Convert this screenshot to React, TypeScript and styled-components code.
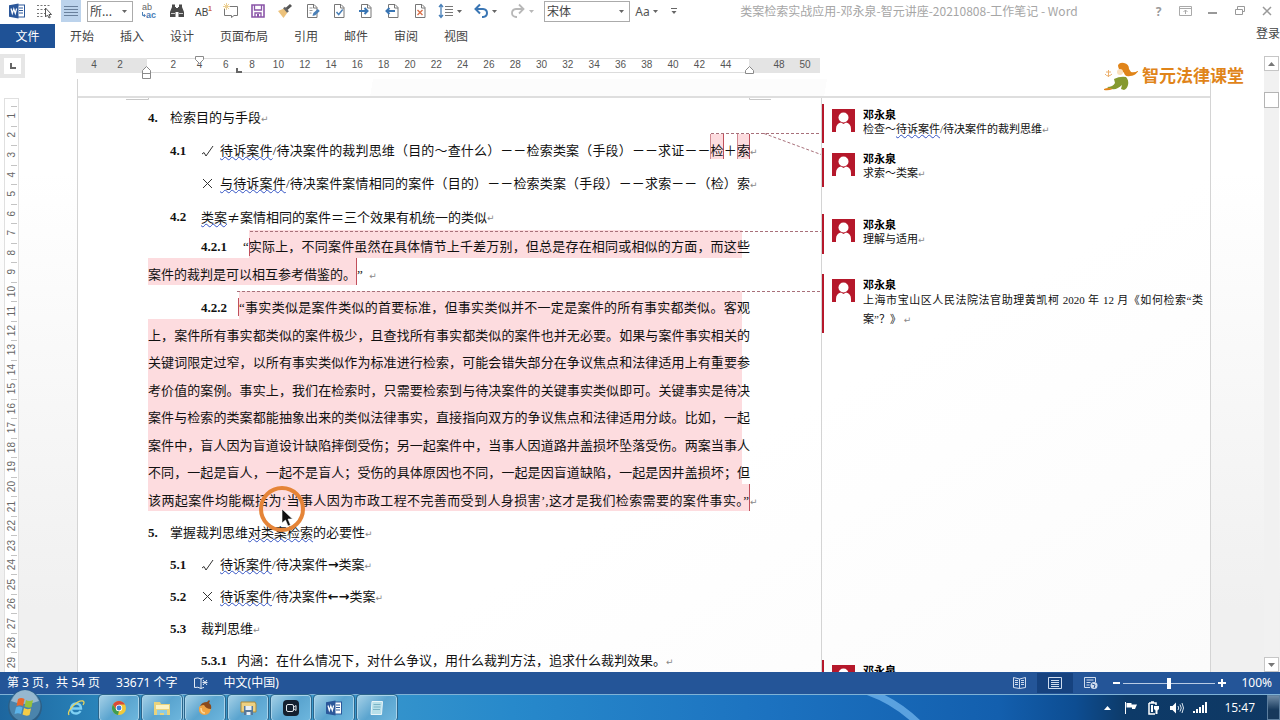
import React from "react";
import styled, { createGlobalStyle, css } from "styled-components";

const UI = `"Noto Sans", "Noto Sans CJK SC", sans-serif`;
const CJK = `"Noto Sans CJK SC", sans-serif`;
const DOC = `"Liberation Serif", "Noto Sans CJK SC", serif`;
const RED = "#b5182b";
const PINK = "#fddcdf";

const Global = createGlobalStyle`
  * { box-sizing: border-box; }
  html, body, #root { height: 100%; margin: 0; }
  body { overflow: hidden; font-family: ${UI}; background: #fff; }
  button, select, input { font: inherit; color: inherit; margin: 0; padding: 0; border: 0; background: none; }
`;

const Shell = styled.div`
  height: 100vh;
  display: flex;
  flex-direction: column;
  overflow: hidden;
  position: relative;
`;

/* ---------- title bar ---------- */
const TitleBar = styled.header`
  display: flex;
  align-items: center;
  height: 22px;
  padding-left: 3px;
  flex: none;
`;
const Tool = styled.button<{ $active?: boolean; $w?: number }>`
  width: ${(p) => p.$w ?? 27}px;
  height: 22px;
  display: flex;
  align-items: center;
  justify-content: center;
  gap: 3px;
  flex: none;
  color: #555;
  font-size: 12px;
  ${(p) =>
    p.$active &&
    css`
      background: linear-gradient(#bcd3ec, #bcd3ec) center / 20px 100% no-repeat;
    `}
`;
const Combo = styled.label<{ $w: number }>`
  display: flex;
  align-items: center;
  width: ${(p) => p.$w}px;
  height: 21px;
  margin: 0 3px;
  padding: 0 5px 0 2px;
  border: 1px solid #ababab;
  flex: none;
  select {
    flex: 1;
    min-width: 0;
    appearance: none;
    font: 12px/18px ${CJK};
    color: #444;
  }
`;
const Title = styled.h1`
  flex: 1;
  margin: 0;
  padding-right: 14px;
  text-align: center;
  white-space: nowrap;
  font: 12px/22px ${CJK};
  color: #a6a6a6;
`;
const WindowButtons = styled.div`
  display: flex;
  font-weight: 700;
  button {
    width: 27px;
    color: #9a9a9a;
  }
`;

/* ---------- ribbon tabs ---------- */
const Tabs = styled.nav`
  display: flex;
  height: 26px;
  padding-top: 2px;
  flex: none;
  font: 12px/22px ${CJK};
  color: #444;
`;
const Tab = styled.button`
  padding: 0 13px;
  height: 24px;
`;
const FileTab = styled(Tab)`
  width: 55px;
  background: #1f5296;
  color: #fff;
  margin-right: 2px;
`;
const SignIn = styled.button`
  margin-left: auto;
  height: 18px;
  line-height: 18px;
  width: 24px;
  white-space: nowrap;
`;

/* ---------- work area ---------- */
const Work = styled.main`
  flex: 1;
  min-height: 0;
  display: flex;
  background: linear-gradient(#fff 20%, #f0f0f0 90%);
`;
const Canvas = styled.div`
  flex: 1;
  min-width: 0;
  display: flex;
  flex-direction: column;
`;
const RulerRow = styled.div`
  display: flex;
  height: 31px;
  flex: none;
  padding-top: 6px;
`;
const Corner = styled.div`
  width: 25px;
  height: 24px;
  border: 4px solid #e6e6e6;
  margin-right: 51px;
  display: flex;
  align-items: center;
  justify-content: center;
`;
const Ruler = styled.div`
  display: flex;
  height: 15px;
  margin-top: 4px;
  font: 10px/14px "Liberation Sans", sans-serif;
  color: #555;
  text-align: center;
  position: relative;
`;
const RulerMargin = styled.div<{ $pad: number }>`
  width: 71px;
  padding-left: ${(p) => p.$pad}px;
  display: flex;
  background: #e4e4e4;
  span {
    width: 26px;
  }
`;
const RulerBody = styled.div`
  width: 602px;
  padding: 0 10px 0 13px;
  display: flex;
  border: solid #dcdcdc;
  border-width: 1px 0;
  line-height: 12px;
  span {
    flex: 1;
  }
`;
const RulerMarks = styled.svg`
  position: absolute;
  left: 0;
  top: -3px;
`;

const DocRow = styled.div`
  flex: 1;
  min-height: 0;
  display: flex;
`;
const SideRuler = styled.div`
  width: 77px;
  padding: 19px 0 0 4px;
  flex: none;
  display: flex;
`;
const SideScale = styled.div`
  width: 15px;
  border: 1px solid #e0e0e0;
  border-bottom: 0;
  background: #fff;
  padding-top: 7px;
  display: flex;
  flex-direction: column;
`;
const SideCell = styled.div`
  flex: 1;
  min-height: 0;
  display: flex;
  align-items: center;
  justify-content: center;
  background: linear-gradient(#c4c4c4, #c4c4c4) 6px 0 / 6px 1px no-repeat;
  font: 10px/10px "Liberation Sans", sans-serif;
  color: #666;
  span {
    writing-mode: vertical-rl;
    transform: rotate(180deg);
  }
`;

const Sheets = styled.div`
  flex: 1;
  min-width: 0;
  display: flex;
  flex-direction: column;
  border: solid #d4d4d4;
  border-width: 0 1px;
  margin-right: 53px;
  background: linear-gradient(150deg, #fff 60%, #fbfbfb);
`;
const PreviousSheet = styled.div`
  height: 19px;
  flex: none;
  border-bottom: 2px solid #dedede;
  background: linear-gradient(100deg, #fff 26%, #fcfcfc 26%, #fcfcfc 66%, #fff 66%);
`;
const Sheet = styled.div`
  flex: 1;
  min-height: 0;
  display: flex;
  overflow: hidden;
`;
const Page = styled.article`
  width: 744px;
  flex: none;
  padding: 0 71px 0 70px;
  border-right: 1px solid #d4d4d4;
  position: relative;
  font: 13px/22px ${DOC};
  color: #111;
`;
const Row = styled.div<{ $pitch: number; $indent?: number }>`
  display: flex;
  height: ${(p) => p.$pitch}px;
  padding: 9px 0 0 ${(p) => p.$indent ?? 0}px;
  white-space: nowrap;
`;
const Label = styled.b<{ $w: number }>`
  display: inline-block;
  width: ${(p) => p.$w}px;
  flex: none;
`;
const Sign = styled.span`
  width: 19px;
  height: 22px;
  display: flex;
  align-items: center;
  flex: none;
`;
const Text = styled.span<{ $fill?: boolean }>`
  ${(p) =>
    p.$fill &&
    css`
      flex: 1;
      text-align: justify;
      text-align-last: justify;
    `}
`;
const Wavy = styled.span`
  text-decoration: underline wavy #3353c4 1px;
  text-underline-offset: 1px;
`;
const Wide = styled.span`
  font-family: ${CJK};
`;
const Arrow = styled.b`
  font-family: "DejaVu Sans", sans-serif;
`;
const Mark = styled.span`
  background: ${PINK};
  box-shadow: inset 1px 0 0 #d08a92, inset -1px 0 0 #c0505c;
  padding: 9px 0 1px;
`;
const Ret = styled.span`
  width: 0;
  color: #888;
  font: 9px/24px "DejaVu Sans", sans-serif;
`;
const Quote = styled.div<{ $lines: number; $after: number }>`
  display: grid;
  grid-template-rows: repeat(${(p) => p.$lines}, minmax(0, 1fr));
  height: ${(p) => (p.$lines * 55) / 2}px;
  margin-bottom: ${(p) => p.$after}px;
  white-space: nowrap;
`;
const Line = styled.div<{ $indent?: number }>`
  display: flex;
  padding-left: ${(p) => p.$indent ?? 0}px;
`;
const Marked = styled.span<{ $kind: "full" | "end" | "short" }>`
  padding-top: 6px;
  background: linear-gradient(${PINK}, ${PINK}) 0 0 / ${(p) => (p.$kind === "full" ? "calc(100% - 8px)" : "100%")} 100% no-repeat;
  ${(p) =>
    p.$kind !== "short" &&
    css`
      flex: 1;
      text-align: justify;
      text-align-last: justify;
    `}
  ${(p) =>
    p.$kind !== "full" &&
    css`
      border-right: 1px solid #c0505c;
    `}
`;
const Plain = styled.span`
  padding-top: 6px;
`;
const Tail = styled(Plain)`
  width: 0;
`;
const Overlay = styled.svg`
  position: absolute;
  left: 1px;
  top: 0;
  overflow: visible;
  pointer-events: none;
`;

/* ---------- comments ---------- */
const Comments = styled.aside`
  flex: 1;
  min-width: 0;
  padding-top: 6px;
  display: flex;
  flex-direction: column;
`;
const Comment = styled.section<{ $gap: number; $h: number }>`
  margin-top: ${(p) => p.$gap}px;
  height: ${(p) => p.$h}px;
  flex: none;
  border-left: 2px solid ${RED};
  padding: 3px 7px 0 8px;
  display: flex;
  gap: 8px;
  svg {
    flex: none;
    margin-top: 2px;
  }
  h2 {
    margin: 0;
    font: bold 11px/15px ${CJK};
    color: #000;
  }
`;
const CommentBody = styled.div`
  flex: 1;
`;
const CommentLine = styled.p<{ $kind?: "first" | "last" }>`
  margin: 0;
  font: 11px/15px ${DOC};
  color: #111;
  white-space: nowrap;
  ${Ret} {
    line-height: 1;
  }
  ${(p) =>
    p.$kind === "first" &&
    css`
      line-height: 16px;
      text-align-last: justify;
    `}
  ${(p) =>
    p.$kind === "last" &&
    css`
      line-height: 22px;
    `}
`;

/* ---------- scroll bar ---------- */
const Scroll = styled.div`
  width: 15px;
  margin: 8px 1px 0 0;
  background: #f1f1f1;
  display: flex;
  flex-direction: column;
`;
const ScrollButton = styled.button`
  height: 15px;
  border: 1px solid #c6c6c6;
  background: #fff;
  display: flex;
  align-items: center;
  justify-content: center;
`;
const Thumb = styled.div`
  height: 16px;
  margin: 21px 0 auto;
  border: 1px solid #b4b4b4;
  background: #fff;
`;

/* ---------- brand ---------- */
const Brand = styled.div`
  position: absolute;
  right: 36px;
  top: 62px;
  display: flex;
  align-items: center;
  gap: 4px;
  color: #e08419;
  font: bold 17px/30px ${DOC};
`;

/* ---------- status bar ---------- */
const Status = styled.footer`
  height: 22px;
  flex: none;
  display: flex;
  align-items: center;
  padding: 0 8px 0 7px;
  background: #245598;
  color: #fff;
  font: 12px/20px ${UI};
  white-space: nowrap;
`;
const StatusItem = styled.span`
  margin-right: 16px;
  display: flex;
`;
const View = styled.button<{ $active?: boolean; $first?: boolean }>`
  width: 36px;
  height: 20px;
  display: flex;
  align-items: center;
  justify-content: center;
  background: ${(p) => (p.$active ? "#16427f" : "none")};
  ${(p) => p.$first && "margin-left: auto;"}
`;
const Step = styled.button`
  width: 14px;
  display: flex;
  justify-content: center;
`;
const Zoom = styled.input`
  width: 92px;
  height: 14px;
  appearance: none;
  background: linear-gradient(#b9cbe4, #b9cbe4) center / 100% 1px no-repeat;
  &::-webkit-slider-thumb {
    appearance: none;
    width: 4px;
    height: 11px;
    background: #fff;
  }
`;
const Percent = styled.span`
  width: 43px;
  text-align: right;
`;

/* ---------- task bar ---------- */
const TaskBar = styled.div`
  height: 26px;
  flex: none;
  display: flex;
  align-items: center;
  border-top: 1px solid #7fb2d6;
  position: relative;
  background: linear-gradient(90deg, #1d669f 0, #2a85bb 8%, #3f9ccd 22%, #2789cb 40%, #1c72c0 60%, #135fae 78%, #0d4d92 84%, #0d3a68 88%, #0f3863 100%);
`;
const Start = styled.button`
  width: 56px;
  height: 26px;
  padding-left: 8px;
  display: flex;
  align-items: flex-end;
  svg {
    overflow: visible;
  }
`;
const Task = styled.button<{ $bare?: boolean; $stack?: boolean }>`
  width: 40px;
  height: 26px;
  margin-right: 3px;
  display: flex;
  align-items: center;
  justify-content: center;
  flex: none;
  ${(p) =>
    !p.$bare &&
    css`
      border: 1px solid #a9d3ea;
      outline: 1px solid #2b648a;
      outline-offset: 0;
      border-radius: 3px;
      background: linear-gradient(135deg, #a3cfe6, #5aa4cf 50%, #6db6dd);
    `}
  ${(p) => p.$stack && "box-shadow: 2px 0 0 #8cc4e2;"}
`;
const Arc = styled.svg`
  position: absolute;
  left: 860px;
  top: 0;
`;
const Tray = styled.div`
  margin-left: auto;
  display: flex;
  align-items: center;
  height: 25px;
  z-index: 1;
  color: #fff;
  font: 12px/24px "Open Sans", "Noto Sans", sans-serif;
`;
const TrayButton = styled.button`
  width: 23px;
  height: 24px;
  display: flex;
  align-items: center;
  justify-content: center;
`;
const Clock = styled.time`
  padding: 0 12px 0 13px;
`;
const Desktop = styled.button`
  width: 13px;
  height: 25px;
  border: 1px solid #5d7f9f;
  background: linear-gradient(#6f8ba6, #17395c 60%);
`;

/* ---------- drawings ---------- */
const Svg = ({ w = 16, h = 16, children }: { w?: number; h?: number; children: React.ReactNode }) => (
  <svg width={w} height={h} viewBox={`0 0 ${w} ${h}`} fill="none" aria-hidden>
    {children}
  </svg>
);
const Caret = ({ c = "#666" }: { c?: string }) => (
  <Svg w={5} h={3}>
    <path d="M0 0h5L2.500 3z" fill={c} />
  </Svg>
);
const WordIcon = () => (
  <Svg>
    <rect x="7.500" y="2" width="8" height="12" fill="#fff" stroke="#2b579a" />
    <path d="M10 5h4M10 7.500h4M10 10h4" stroke="#2b579a" />
    <path d="M0 2.200L9.500.5v15L0 13.800z" fill="#2b579a" />
    <path d="M2 5.500l1.300 5L4.800 6l1.500 4.500 1.300-5" stroke="#fff" strokeWidth="1.200" />
  </Svg>
);
const PageIcon = ({ children }: { children?: React.ReactNode }) => (
  <Svg>
    <path d="M3.500 1.500h6.500l3 3v10H3.500z" stroke="#777" fill="#fff" />
    <path d="M9.500 1.500v3.500h3.500" stroke="#777" />
    {children}
  </Svg>
);
const Avatar = () => (
  <Svg w={23} h={23}>
    <path d="M0 0h23v23H0z" fill={RED} />
    <circle cx="11.500" cy="8.500" r="5" fill="#fff" />
    <path d="M4 23v-3q0-5.500 5-6.500l2.500 1.500 2.500-1.500q5 1 5 6.500v3z" fill="#fff" />
  </Svg>
);

const tools: [string, React.ReactNode][] = [
  ["替换", <Svg w={17} key="r"><text x="1" y="7" fontSize="9" fontFamily="Liberation Sans" fill="#666">ab</text><text x="5" y="15" fontSize="9" fontWeight="bold" fontFamily="Liberation Sans" fill="#4a80b8">ac</text><path d="M1.500 9v3.500H4M2.800 11l1.500 1.500L2.800 14" stroke="#4a80b8" /></Svg>],
  ["查找", <Svg key="f"><path d="M3 1.500h3v2.500h1V5h2V4h1V1.500h3V4l2 5v5H9.500V9h-3v5H1V9l2-5z" fill="#4a4a4a" /><path d="M2 10.500h4M10 10.500h4" stroke="#ccc" /></Svg>],
  ["脚注", <Svg w={18} key="n"><text x="0" y="13" fontSize="10" fontFamily="Liberation Sans" fill="#444">AB</text><text x="13" y="8" fontSize="7" fontWeight="bold" fontFamily="Liberation Sans" fill="#d0673a">1</text></Svg>],
  ["批注", <Svg key="c"><path d="M5 3.500h9.500v9H11l-2.500 2v-2h-7V6" stroke="#777" /><path d="M3.500 0v7M0 3.500h7M1 1l5 5M6 1L1 6" stroke="#ecd095" /></Svg>],
  ["保存", <Svg key="s"><path d="M2 2h12v12H2z" stroke="#8a55a8" strokeWidth="1.600" /><path d="M4.500 2v5h7V2M5 14v-4h6v4" stroke="#8a55a8" strokeWidth="1.300" /><path d="M7 11h2v3H7z" fill="#8a55a8" /></Svg>],
  ["格式刷", <Svg key="b"><path d="M1 8l6-2.500 3.500 4L6.500 15z" fill="#ecc27c" /><path d="M7 4.500L11 9" stroke="#666" strokeWidth="2.500" /><path d="M9.500 6L14 2" stroke="#555" strokeWidth="3" /></Svg>],
  ["编辑", <PageIcon key="e"><path d="M5.500 5h3M5.500 7.500h3M5.500 10h2" stroke="#999" /><path d="M8.500 13l.8-3 4.500-4 2 2-4.500 4.300z" fill="#4a80b8" /></PageIcon>],
  ["接受", <PageIcon key="a"><path d="M5.500 9l2.200 2.500 4-5" stroke="#4a80b8" strokeWidth="1.500" /></PageIcon>],
  ["下一条", <PageIcon key="x"><path d="M1 8h8M6.500 5L9.500 8l-3 3" stroke="#3a76b4" strokeWidth="2" /></PageIcon>],
  ["上一条", <PageIcon key="p"><path d="M2 8h8M4.500 5l-3 3 3 3" stroke="#3a76b4" strokeWidth="2" /></PageIcon>],
  ["拒绝", <PageIcon key="d"><path d="M5.500 7l5 5M10.500 7l-5 5" stroke="#d9704a" strokeWidth="1.400" /></PageIcon>],
];

const evens = Array.from({ length: 22 }, (_, i) => (i + 1) * 2);
const rows = Array.from({ length: 29 }, (_, i) => i + 1);

const bodyLines = [
  "上，案件所有事实都类似的案件极少，且查找所有事实都类似的案件也并无必要。如果与案件事实相关的",
  "关键词限定过窄，以所有事实类似作为标准进行检索，可能会错失部分在争议焦点和法律适用上有重要参",
  "考价值的案例。事实上，我们在检索时，只需要检索到与待决案件的关键事实类似即可。关键事实是待决",
  "案件与检索的类案都能抽象出来的类似法律事实，直接指向双方的争议焦点和法律适用分歧。比如，一起",
  "案件中，盲人因为盲道设计缺陷摔倒受伤；另一起案件中，当事人因道路井盖损坏坠落受伤。两案当事人",
  "不同，一起是盲人，一起不是盲人；受伤的具体原因也不同，一起是因盲道缺陷，一起是因井盖损坏；但",
];

const Return = () => <Ret aria-hidden>↵</Ret>;
const Check = () => (
  <Sign>
    <Svg w={14} h={14}><path d="M1 10l2-1.500L5 12 12 2" stroke="#333" /></Svg>
  </Sign>
);
const Cross = () => (
  <Sign>
    <Svg w={14} h={14}><path d="M2 2l9 9M11 2l-9 9" stroke="#333" /></Svg>
  </Sign>
);

const Folder = () => (
  <Svg w={18} h={16}><path d="M1 2h6l1 2h9v11H1z" fill="#e9d27c" /><path d="M3 5h13v4H3z" fill="#fbf2c4" /><path d="M4 15v-5h10v5h-3v-2H7v2z" fill="#8ccbe4" /></Svg>
);

export default function App() {
  return (
    <Shell>
      <Global />
      <TitleBar>
        <Tool aria-label="Word"><WordIcon /></Tool>
        <Tool aria-label="选择">
          <Svg><path d="M1 2.500h13M1 6.500h8M1 10.500h8M1 13.500h6" stroke="#777" strokeDasharray="2 1.500" /><path d="M9.500 5v9l2-2 1.500 3 1.300-.7L13 11.500h2.500z" fill="#fff" stroke="#555" /></Svg>
        </Tool>
        <Tool $active aria-label="两端对齐">
          <Svg w={14} h={12}><path d="M0 1.500h14M0 4.500h14M0 7.500h14M0 10.500h14" stroke="#69809c" /></Svg>
        </Tool>
        <Combo $w={46}>
          <select aria-label="标记"><option>所...</option></select>
          <Caret />
        </Combo>
        {tools.map(([name, icon]) => (
          <Tool key={name} aria-label={name}>{icon}</Tool>
        ))}
        <Tool $w={34} aria-label="行距">
          <Svg><path d="M3 1.500v13M1 4l2-2.500L5 4M1 12l2 2.500L5 12" stroke="#4a80b8" strokeWidth="1.300" /><path d="M7 3.500h8M7 6.500h8M7 9.500h8M7 12.500h8" stroke="#777" /></Svg>
          <Caret />
        </Tool>
        <Tool $w={36} aria-label="撤消">
          <Svg><path d="M3 6h7q4 .5 4 4t-4 4H9" stroke="#3a76b4" strokeWidth="2" /><path d="M7 1.500L2.500 6 7 10.500" stroke="#3a76b4" strokeWidth="2" /></Svg>
          <Caret />
        </Tool>
        <Tool $w={38} aria-label="恢复">
          <Svg><path d="M13 6H6q-4 .5-4 4t4 4h1" stroke="#b8b8b8" strokeWidth="1.800" /><path d="M9 1.500L13.500 6 9 10.500" stroke="#b8b8b8" strokeWidth="1.800" /></Svg>
          <Caret c="#b8b8b8" />
        </Tool>
        <Combo $w={86}>
          <select aria-label="字体"><option>宋体</option></select>
          <Caret />
        </Combo>
        <Tool aria-label="更改大小写">Aa<Caret /></Tool>
        <Tool aria-label="自定义">
          <Svg w={6} h={6}><path d="M0 .5h6" stroke="#666" /><path d="M.5 3h5L3 6z" fill="#666" /></Svg>
        </Tool>
        <Title>类案检索实战应用-邓永泉-智元讲座-20210808-工作笔记 - Word</Title>
        <WindowButtons>
          <Tool aria-label="帮助">?</Tool>
          <Tool aria-label="功能区"><Svg w={13} h={10}><path d="M.5.5h12v9H.5z M.5 2.500h12M6.500 8V4M4.500 6l2-2 2 2" stroke="#aaa" /></Svg></Tool>
          <Tool aria-label="最小化"><Svg w={9} h={10}><path d="M0 7h9" stroke="#999" strokeWidth="2" /></Svg></Tool>
          <Tool aria-label="还原"><Svg w={10} h={10}><path d="M.5 3.500h7v5h-7zM2.500 3V.5h7v5H8" stroke="#999" /></Svg></Tool>
          <Tool aria-label="关闭"><Svg w={10} h={10}><path d="M1 1l8 8M9 1L1 9" stroke="#999" strokeWidth="1.500" /></Svg></Tool>
        </WindowButtons>
      </TitleBar>

      <Tabs>
        <FileTab>文件</FileTab>
        {["开始", "插入", "设计", "页面布局", "引用", "邮件", "审阅", "视图"].map((t) => (
          <Tab key={t}>{t}</Tab>
        ))}
        <SignIn>登录</SignIn>
      </Tabs>

      <Work>
        <Canvas>
          <RulerRow>
            <Corner><Svg w={6} h={6}><path d="M1 0v5h5" stroke="#666" strokeWidth="2" /></Svg></Corner>
            <Ruler>
              <RulerMargin $pad={5}><span>4</span><span>2</span></RulerMargin>
              <RulerBody>{evens.map((n) => <span key={n}>{n}</span>)}</RulerBody>
              <RulerMargin $pad={17}><span>48</span><span>50</span></RulerMargin>
              <RulerMarks width="744" height="26" fill="none">
                <path d="M119.500 1.500h8v3l-4 4-4-4z" stroke="#8a8a8a" fill="#fff" />
                <path d="M66.500 23.500v-8l4-4 4 4v8zM66.500 18.500h8" stroke="#8a8a8a" fill="#fff" />
                <path d="M669.500 18.500v-3l4-4 4 4v3z" stroke="#8a8a8a" fill="#fff" />
                <path d="M161 13v4h5" stroke="#666" strokeWidth="2" />
              </RulerMarks>
            </Ruler>
          </RulerRow>
          <DocRow>
            <SideRuler>
              <SideScale>
                {rows.map((n) => <SideCell key={n}><span>{n}</span></SideCell>)}
              </SideScale>
            </SideRuler>
            <Sheets>
              <PreviousSheet />
              <Sheet>
                <Page>
                  <Row $pitch={33}><Label $w={22}>4.</Label><Text>检索目的与手段</Text><Return /></Row>
                  <Row $pitch={33} $indent={22}>
                    <Label $w={31}>4.1</Label><Check />
                    <Text $fill><Wavy>待诉案件</Wavy>/待决案件的裁判思维（目的～查什么）－－检索类案（手段）－－求证－－<Mark>检</Mark>＋<Mark>索</Mark></Text>
                    <Return />
                  </Row>
                  <Row $pitch={33} $indent={53}>
                    <Cross />
                    <Text $fill><Wavy>与待诉案件</Wavy>/待决案件案情相同的案件（目的）－－检索类案（手段）－－求索－－（检）索</Text>
                    <Return />
                  </Row>
                  <Row $pitch={33} $indent={22}>
                    <Label $w={31}>4.2</Label>
                    <Text><Wavy>类案</Wavy><Wide>≠</Wide>案情相同的案件＝三个效果有机统一的类似</Text>
                    <Return />
                  </Row>
                  <Quote $lines={2} $after={6}>
                    <Line $indent={53}>
                      <Plain><Label $w={42}>4.2.1</Label>“</Plain>
                      <Marked $kind="full">实际上，不同案件虽然在具体情节上千差万别，但总是存在相同或相似的方面，而这些</Marked>
                    </Line>
                    <Line><Marked $kind="short">案件的裁判是可以相互参考借鉴的。</Marked><Plain>”&nbsp;&nbsp;</Plain><Tail><Return /></Tail></Line>
                  </Quote>
                  <Quote $lines={8} $after={2}>
                    <Line $indent={53}>
                      <Plain><Label $w={38}>4.2.2</Label></Plain>
                      <Marked $kind="full">“事实类似是案件类似的首要标准，但事实类似并不一定是案件的所有事实都类似。客观</Marked>
                    </Line>
                    {bodyLines.map((l) => <Line key={l}><Marked $kind="full">{l}</Marked></Line>)}
                    <Line><Marked $kind="end">该两起案件均能概括为‘当事人因为市政工程不完善而受到人身损害’,这才是我们检索需要的案件事实。”</Marked><Tail><Return /></Tail></Line>
                  </Quote>
                  <Row $pitch={32}><Label $w={22}>5.</Label><Text>掌握裁判思维<Wavy>对类案检索</Wavy>的必要性</Text><Return /></Row>
                  <Row $pitch={32} $indent={22}><Label $w={31}>5.1</Label><Check /><Text><Wavy>待诉案件</Wavy>/待决案件<Arrow>→</Arrow>类案</Text><Return /></Row>
                  <Row $pitch={32} $indent={22}><Label $w={31}>5.2</Label><Cross /><Text><Wavy>待诉案件</Wavy>/待决案件<Arrow>←→</Arrow>类案</Text><Return /></Row>
                  <Row $pitch={32} $indent={22}><Label $w={31}>5.3</Label><Text>裁判思维</Text><Return /></Row>
                  <Row $pitch={32} $indent={53}><Label $w={36}>5.3.1</Label><Text>内涵：在什么情况下，对什么争议，用什么裁判方法，追求什么裁判效果。</Text><Return /></Row>
                  <Overlay width="743" height="570" fill="none">
                    <path d="M47 1.500h22.500v-5M692 1.500h-21.500v-5" stroke="#c8c8c8" />
                    <path d="M632 35.500h110M685 35.500l57 21M171 133.500h571M158 193.500h584" stroke="#a8707a" strokeDasharray="3 2" />
                    <path d="M170.500 140v18M159.500 200v18" stroke="#c0505c" />
                    <circle cx="203" cy="411" r="21" stroke="#e58437" strokeWidth="4" />
                    <path d="M203 411v14l3.500-3 2.500 6 2.500-1-2.500-6h4.500z" fill="#111" stroke="#fff" strokeWidth=".6" />
                  </Overlay>
                </Page>
                <Comments>
                  <Comment $gap={0} $h={39}><Avatar /><CommentBody><h2>邓永泉</h2><CommentLine>检查～<Wavy>待诉案件</Wavy>/待决案件的裁判思维<Return /></CommentLine></CommentBody></Comment>
                  <Comment $gap={5} $h={39}><Avatar /><CommentBody><h2>邓永泉</h2><CommentLine>求索～类案<Return /></CommentLine></CommentBody></Comment>
                  <Comment $gap={27} $h={40}><Avatar /><CommentBody><h2>邓永泉</h2><CommentLine>理解与适用<Return /></CommentLine></CommentBody></Comment>
                  <Comment $gap={20} $h={59}>
                    <Avatar />
                    <CommentBody>
                      <h2>邓永泉</h2>
                      <CommentLine $kind="first">上海市宝山区人民法院法官助理黄凯柯 2020 年 12 月《如何检索“类</CommentLine>
                      <CommentLine $kind="last">案”？》 <Return /></CommentLine>
                    </CommentBody>
                  </Comment>
                  <Comment $gap={327} $h={39}><Avatar /><CommentBody><h2>邓永泉</h2></CommentBody></Comment>
                </Comments>
              </Sheet>
            </Sheets>
          </DocRow>
        </Canvas>
        <Scroll>
          <ScrollButton aria-label="向上"><Svg w={7} h={4}><path d="M0 4h7L3.500 0z" fill="#777" /></Svg></ScrollButton>
          <Thumb />
          <ScrollButton aria-label="向下"><Svg w={7} h={4}><path d="M0 0h7L3.500 4z" fill="#777" /></Svg></ScrollButton>
        </Scroll>
      </Work>

      <Brand>
        <Svg w={34} h={30}>
          <path d="M14 3q2-3 6-2 5 1 5 6l2 3q4 1 8-2-4 6-9 6-3 1-5-1-1-3-3-4-4-1-4-6z" fill="#e08419" />
          <circle cx="16" cy="10" r="3" fill="#fbe0bd" />
          <path d="M10 17q6-3 12-2 3 3 2 8-1 4-4 5l-3-1 1-4q-5 5-10 4-3 0-5-2 6 0 8-4z" fill="#85992f" />
          <path d="M0 27q4-2 9 0-5 2-9 1z" fill="#e08419" />
          <path d="M1 12q3 4 7 0M4.500 8v7M2 10h5" stroke="#ecb06e" />
        </Svg>
        智元法律课堂
      </Brand>

      <Status>
        <StatusItem>第 3 页，共 54 页</StatusItem>
        <StatusItem>33671 个字</StatusItem>
        <StatusItem><Svg w={14} h={12}><path d="M7 2Q4 0 .5 1.500v9Q4 9.500 7 11.500V2q1-1 2.500-1M7 11.500q2-1 3-1" stroke="#e3ebf6" /><path d="M9 3l4 5M13 3L9 8M8.500 5.500h5" stroke="#e3ebf6" /></Svg></StatusItem>
        <StatusItem>中文(中国)</StatusItem>
        <View $first aria-label="阅读视图"><Svg w={13} h={12}><path d="M6.500 2L.5.500v10l6 1 6-1V.500zM6.500 2v9.500M2 3.500h3M2 5.500h3M2 7.500h3M8 3.500h3M8 5.500h3M8 7.500h3" stroke="#cfdcee" /></Svg></View>
        <View $active aria-label="页面视图"><Svg w={14} h={12}><path d="M.5.500h13v11H.5zM3 3.500h8M3 5.500h8M3 7.500h8M3 9.500h8" stroke="#cfdcee" /></Svg></View>
        <View aria-label="Web 版式"><Svg w={14} h={12}><path d="M6 10.500H.5v-10h11V5M2.500 3h7M2.500 5.500h4M2.500 8h3" stroke="#cfdcee" /><circle cx="10" cy="8.500" r="3.500" fill="#cfdcee" /><path d="M8 7l3 1-1 3" stroke="#245598" /></Svg></View>
        <Step aria-label="缩小"><Svg w={7} h={8}><path d="M0 4h7" stroke="#fff" strokeWidth="2" /></Svg></Step>
        <Zoom type="range" aria-label="缩放" min={0} max={200} defaultValue={100} />
        <Step aria-label="放大"><Svg w={8} h={8}><path d="M0 4h8M4 0v8" stroke="#fff" strokeWidth="2" /></Svg></Step>
        <Percent>100%</Percent>
      </Status>

      <TaskBar>
        <Arc width="110" height="25" fill="none"><path d="M6-4q30 10 54 34" stroke="#6cb0ea" strokeWidth="7" opacity=".8" /></Arc>
        <Start aria-label="开始菜单">
          <Svg w={34} h={30}>
            <circle cx="17" cy="16" r="17" fill="#2d5f86" />
            <circle cx="17" cy="15" r="15.500" fill="#4a84ac" />
            <path d="M3 10Q8-1 17-1t14 11q-14 6-28 0z" fill="#a9c6d8" opacity=".8" />
            <path d="M10 8q3-2 6.500 0L15 15q-3-1.500-6.500 0z" fill="#e8672c" />
            <path d="M18 9q3 2 7 0l-1.500 7q-3 1.500-7-.5z" fill="#97c13c" />
            <path d="M8 16.500q3-2 6.500 0L13 23q-3-1.500-6.500 0z" fill="#5cb4ea" />
            <path d="M16 17q3 2 7 .5L21.500 24q-3 1.500-7-.5z" fill="#f6cc45" />
          </Svg>
        </Start>
        <Task $bare aria-label="Internet Explorer">
          <Svg w={18} h={18}><path d="M4.500 9.500H14q0-5-4.800-5T4 10q.3 4.500 5 4.500 3 0 4.500-2.500" stroke="#7fd0f4" strokeWidth="2.400" /><path d="M2 16q-2-3 4-9t10-5q2 1 0 4" stroke="#e9d35c" strokeWidth="1.300" /></Svg>
        </Task>
        <Task aria-label="Chrome">
          <Svg w={14} h={14}><circle cx="7" cy="7" r="7" fill="#f0c93a" /><path d="M1 3.500A7 7 0 0 1 13 3.500H7L4 8z" fill="#d94a3a" /><path d="M1 3.500L5 10l2 0-1 4A7 7 0 0 1 1 3.500z" fill="#3f9c50" /><circle cx="7" cy="7" r="3.200" fill="#fff" /><circle cx="7" cy="7" r="2.400" fill="#3f7fd8" /></Svg>
        </Task>
        <Task $stack aria-label="资源管理器"><Folder /></Task>
        <Task aria-label="坚果云">
          <Svg w={16} h={16}><path d="M2 7Q1 15 8 15q6-1 6-8L7 3z" fill="#efa444" /><path d="M3 6q2-4 7-4l2-2 1 1-1 2q3 2 2 6-5 0-7-4Q5 5 3 6z" fill="#8a4a1c" /><path d="M4 8q0 5 4 5" stroke="#fbd79a" strokeWidth="1.500" /></Svg>
        </Task>
        <Task aria-label="文件保存">
          <Svg w={17} h={16}><path d="M1 2h14l1 2v8H1z" fill="#edd182" stroke="#a98a3c" /><path d="M4 6h9v9H4z" fill="#56799c" /><path d="M5.500 6h6v4h-6zM6.500 12h4v3h-4z" fill="#e8eff5" /></Svg>
        </Task>
        <Task aria-label="录屏">
          <Svg w={16} h={16}><rect width="16" height="16" rx="4" fill="#14202f" /><rect x="3.500" y="4.500" width="7" height="7" rx="1.500" stroke="#e4e9ee" /><path d="M10.500 7.500L13 5.500v5l-2.500-2" stroke="#e4e9ee" /></Svg>
        </Task>
        <Task aria-label="Word 文档"><WordIcon /></Task>
        <Task aria-label="记事本">
          <Svg w={14} h={16}><path d="M2 1.500h10.500l-1 13H1z" fill="#b8e0ea" stroke="#e9f5f8" /><path d="M3.500 4.500h7M3.500 7h7M3 9.500h7" stroke="#7ab3c6" /></Svg>
        </Task>
        <Tray>
          <TrayButton aria-label="显示隐藏的图标"><Svg w={7} h={4}><path d="M0 4h7L3.500 0z" fill="#fff" /></Svg></TrayButton>
          <TrayButton aria-label="操作中心"><Svg w={14} h={14}><path d="M1.500 1v12" stroke="#fff" /><path d="M2.500 2h5v1.500H13L11 8H8V6.500H2.500z" fill="#fff" /></Svg></TrayButton>
          <TrayButton aria-label="电源"><Svg w={13} h={14}><path d="M2 2h7v2M2 2v11h6M4 1h3" stroke="#fff" strokeWidth="1.500" /><path d="M4 4h2v7H4zM7 5h5v3l-1.500 1.500V13H8.500V9.500L7 8z" fill="#fff" /></Svg></TrayButton>
          <TrayButton aria-label="音量"><Svg w={14} h={12}><path d="M0 4h2.500L6 .5v11L2.500 8H0z" fill="#fff" /><path d="M8 4q1.500 2 0 4M10 2.500q2.500 3.500 0 7M12 1q3 5 0 10" stroke="#dbe6f0" /></Svg></TrayButton>
          <TrayButton aria-label="网络"><Svg w={14} h={11}><path d="M1 11V9M4 11V7M7 11V5M10 11V3M13 11V0" stroke="#fff" strokeWidth="2" /></Svg></TrayButton>
          <Clock>15:47</Clock>
          <Desktop aria-label="显示桌面" />
        </Tray>
      </TaskBar>
    </Shell>
  );
}
